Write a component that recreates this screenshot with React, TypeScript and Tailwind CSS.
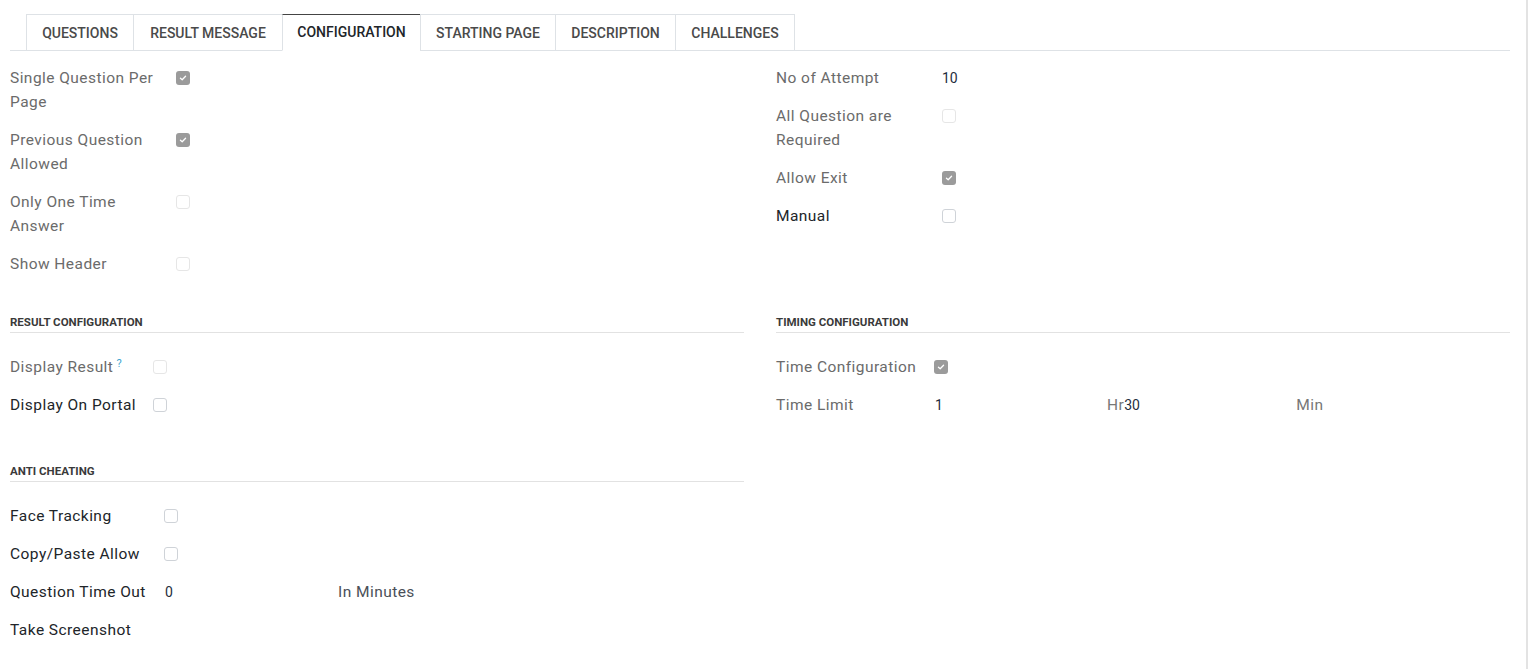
import React from 'react';

const tabs = [
  { name: 'QUESTIONS', w: 'w-[107px]' },
  { name: 'RESULT MESSAGE', w: 'w-[149px]' },
  { name: 'CONFIGURATION', w: 'w-[138px]', active: true },
  { name: 'STARTING PAGE', w: 'w-[135px]' },
  { name: 'DESCRIPTION', w: 'w-[120px]' },
  { name: 'CHALLENGES', w: 'w-[120px]' },
];

const Checkbox: React.FC<{ checked?: boolean; muted?: boolean }> = ({ checked, muted }) =>
  checked ? (
    <span className="mt-[5px] flex h-[14px] w-[14px] items-center justify-center rounded-[3px] bg-[#9b9b9b]">
      <svg viewBox="0 0 10 10" className="h-[8px] w-[8px]">
        <path d="M1.8 5.2 L4 7.2 L8.2 2.8" fill="none" stroke="#fff" strokeWidth="1.6" strokeLinecap="round" strokeLinejoin="round" />
      </svg>
    </span>
  ) : (
    <span
      className={`mt-[5px] block h-[14px] w-[14px] rounded-[3px] border bg-white ${
        muted ? 'border-[#e6e6e6]' : 'border-[#cfd3d8]'
      }`}
    />
  );

type RowProps = {
  label: string;
  labelW: string;
  dark?: boolean;
  help?: boolean;
  children?: React.ReactNode;
};

const Row: React.FC<RowProps> = ({ label, labelW, dark, help, children }) => (
  <div className="flex items-start py-[7px] leading-6">
    <div className={`${labelW} shrink-0 whitespace-pre-line ${dark ? 'text-[#212529]' : 'text-[#6b6b6b]'}`}>
      {label}
      {help && <sup className="ml-[3px] text-[11px] text-[#3fa6d1]">?</sup>}
    </div>
    <div className="flex items-start">{children}</div>
  </div>
);

const SectionHeader: React.FC<{ title: string }> = ({ title }) => (
  <div className="border-b border-[#e2e2e2] pb-[2px] text-[11.5px] font-bold leading-4 tracking-normal text-[#3a3a3a]">
    {title}
  </div>
);

export default function App() {
  return (
    <div
      className="relative h-[669px] w-full overflow-hidden bg-white text-[15.5px] tracking-[0.45px]"
      style={{ fontFamily: 'Roboto, "Open Sans", sans-serif' }}
    >
      <div className="absolute right-0 top-0 h-full w-[2px] bg-[#e3e3e3]" />
      <div className="ml-[10px] w-[1500px] pt-[14px]">
        {/* tabs */}
        <div className="flex border-b border-[#dee2e6] pl-[16px] tracking-normal">
          {tabs.map((t, i) => (
            <div
              key={t.name}
              className={`${t.w} -mb-px flex h-[37px] items-center justify-center border-l border-t text-[14px] font-medium ${
                i === tabs.length - 1 ? 'border-r' : ''
              } ${
                t.active
                  ? 'border-b border-b-white border-l-[#dee2e6] border-t-[#444] bg-white text-[#212529]'
                  : 'border-[#dee2e6] text-[#4a4a4a]'
              }`}
            >
              {t.name}
            </div>
          ))}
        </div>

        <div className="grid grid-cols-2 gap-x-8 pt-[8px]">
          {/* top left */}
          <div>
            <Row label={'Single Question Per\nPage'} labelW="w-[166px]">
              <Checkbox checked />
            </Row>
            <Row label={'Previous Question\nAllowed'} labelW="w-[166px]">
              <Checkbox checked />
            </Row>
            <Row label={'Only One Time\nAnswer'} labelW="w-[166px]">
              <Checkbox muted />
            </Row>
            <Row label="Show Header" labelW="w-[166px]">
              <Checkbox muted />
            </Row>
          </div>
          {/* top right */}
          <div>
            <Row label="No of Attempt" labelW="w-[166px]">
              <span className="text-[14px] tracking-normal text-[#1f2d3d]">10</span>
            </Row>
            <Row label={'All Question are\nRequired'} labelW="w-[166px]">
              <Checkbox muted />
            </Row>
            <Row label="Allow Exit" labelW="w-[166px]">
              <Checkbox checked />
            </Row>
            <Row label="Manual" labelW="w-[166px]" dark>
              <Checkbox />
            </Row>
          </div>

          {/* result configuration */}
          <div className="mt-[31px]">
            <SectionHeader title="RESULT CONFIGURATION" />
            <div className="pt-[15px]">
              <Row label="Display Result" labelW="w-[143px]" help>
                <Checkbox muted />
              </Row>
              <Row label="Display On Portal" labelW="w-[143px]" dark>
                <Checkbox />
              </Row>
            </div>
          </div>
          {/* timing configuration */}
          <div className="mt-[31px]">
            <SectionHeader title="TIMING CONFIGURATION" />
            <div className="pt-[15px]">
              <Row label="Time Configuration" labelW="w-[158px]">
                <Checkbox checked />
              </Row>
              <Row label="Time Limit" labelW="w-[159px]">
                <span className="w-[172px] text-[14px] tracking-normal text-[#1f2d3d]">1</span>
                <span className="text-[#777]">Hr</span>
                <span className="w-[172px] text-[14px] tracking-normal text-[#1f2d3d]">30</span>
                <span className="text-[#777]">Min</span>
              </Row>
            </div>
          </div>

          {/* anti cheating */}
          <div className="mt-[39px]">
            <SectionHeader title="ANTI CHEATING" />
            <div className="pt-[15px]">
              <Row label="Face Tracking" labelW="w-[154px]" dark>
                <Checkbox />
              </Row>
              <Row label="Copy/Paste Allow" labelW="w-[154px]" dark>
                <Checkbox />
              </Row>
              <Row label="Question Time Out" labelW="w-[155px]" dark>
                <span className="w-[173px] text-[14px] tracking-normal text-[#1f2d3d]">0</span>
                <span className="text-[#4a5058]">In Minutes</span>
              </Row>
              <Row label="Take Screenshot" labelW="w-[154px]" dark />
            </div>
          </div>
          <div />
        </div>
      </div>
    </div>
  );
}
